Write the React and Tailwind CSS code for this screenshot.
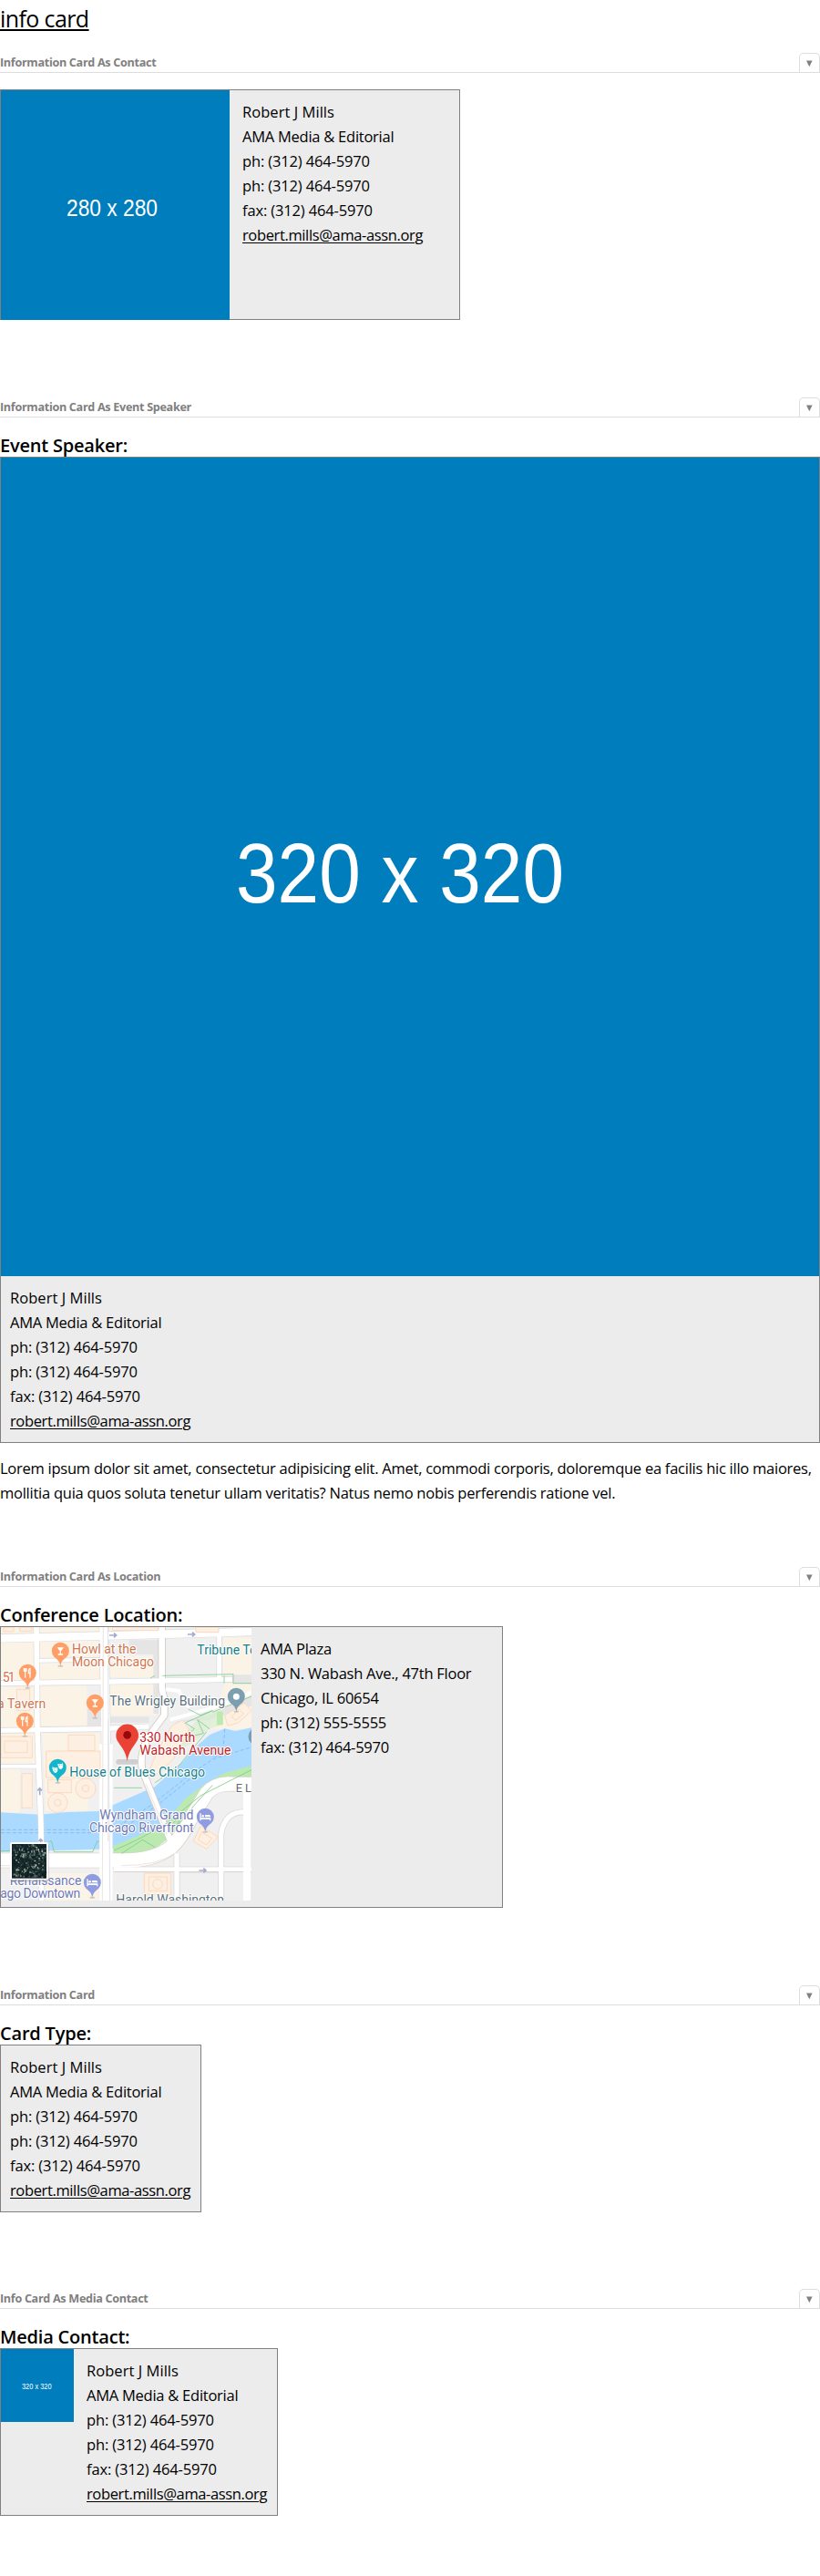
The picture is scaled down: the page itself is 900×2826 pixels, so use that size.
import React from "react";

const BODY = "text-[16.5px] leading-[27px] tracking-[-0.25px] whitespace-nowrap";

function SectionHeader({ title }) {
  return (
    <header className="flex h-[22px] items-end justify-between border-b border-[#ddd]">
      <h2 className="text-[12.6px] leading-[20px] font-bold tracking-[-0.3px] whitespace-nowrap text-[#808080]">{title}</h2>
      <button aria-label="Toggle" className="flex h-[21px] w-[23px] items-center justify-center rounded-t-[5px] border border-b-0 border-[#ddd]">
        <svg width="7" height="8" viewBox="0 0 7 8" className="mt-0.5">
          <path d="M0 0.5H6.6L3.3 7.2Z" fill="#808080" />
        </svg>
      </button>
    </header>
  );
}

function Placeholder({ label, className, size, x, baseline, length, box }) {
  return (
    <svg className={className} viewBox={box} preserveAspectRatio="none">
      <rect width="100%" height="100%" fill="#007dbc" />
      <text x={x} y={baseline} fill="#fff" fontFamily="Liberation Sans, sans-serif" fontSize={size} textLength={length} lengthAdjust="spacingAndGlyphs">
        {label}
      </text>
    </svg>
  );
}

function Heading({ children }) {
  return <h3 className="h-[43px] pt-[19px] text-[20px] leading-[23px] font-semibold tracking-[-0.2px] whitespace-nowrap">{children}</h3>;
}

function Contact() {
  return (
    <div className={BODY}>
      <p className="tracking-[0.05px]">Robert J Mills</p>
      <p>AMA Media &amp; Editorial</p>
      <p className="tracking-[-0.15px]">ph: (312) 464-5970</p>
      <p className="tracking-[-0.15px]">ph: (312) 464-5970</p>
      <p className="tracking-[-0.15px]">fax: (312) 464-5970</p>
      <p><a className="tracking-[-0.37px] underline decoration-1 underline-offset-2">robert.mills@ama-assn.org</a></p>
    </div>
  );
}

function Pin({ x, y, color, kind }) {
  return (
    <g transform={`translate(${x} ${y})`}>
      <ellipse cx="0" cy="49" rx="9" ry="3" fill="#b9b5ad" opacity=".7" />
      <path d="M0 49C-3 34-9 28-20 20A28.500 28.500 0 1 1 20 20C9 28 3 34 0 49Z" fill={color} />
      {kind === "food" && (
        <g stroke="#fff" strokeWidth="3.5" fill="none">
          <path d="M-12-16V-7Q-8-2-4-7V-16M-8-16V16M8 16V-15Q2-12 3 1H8" />
        </g>
      )}
      {kind === "bar" && <path d="M-11-12H11L2 0V9H8V13H-8V9H-2V0Z" fill="#fff" />}
      {kind === "bed" && (
        <g>
          <path d="M-18-12H-14V3H18V12H14V8H-14V12H-18ZM-1-7H13Q18-6 18 0H-1Z" fill="#fff" />
          <circle cx="-8" cy="-3" r="4" fill="#fff" />
        </g>
      )}
      {kind === "dot" && <circle r="10.500" fill="#fff" />}
      {kind === "mask" && (
        <g fill="#fff">
          <path d="M0-14Q8-10 17-15Q20 3 10 5Q1 4 0-14Z" />
          <path d="M-18-3Q-9 2-1-2Q3 14-7 17Q-17 16-18-3Z" />
          <path d="M-13 4h3M-6 4h3M-12 11q4-3 7 0M5-8h3M12-8h3" stroke={color} strokeWidth="2" fill="none" />
        </g>
      )}
    </g>
  );
}

const SPECKLE_COLORS = ["#0d1c20", "#1d3430", "#35504a", "#10262b", "#5b6f6a", "#8d948c", "#213c33", "#c1beb2"];
const SPECKLES = (() => {
  let seed = 7;
  const next = () => (seed = (seed * 1103515245 + 12345) % 2147483648) / 2147483648;
  return Array.from({ length: 330 }, () => ({
    x: 39 + next() * 108,
    y: 969 + next() * 105,
    w: 3 + next() * 4,
    h: 3 + next() * 5,
    c: SPECKLE_COLORS[Math.floor(Math.pow(next(), 1.3) * 8)],
  }));
})();

const RIVER_DRIVE = "M3 1023H400Q505 1025 563 980Q595 950 625 890L680 802Q705 773 750 771L828 772";
const BRIDGE = "M533 255V460L541 490V545L515 580Q475 630 470 665Q462 700 470 730L562 960";

function CityMap() {
  const halo = { stroke: "#fff", strokeWidth: 6, paintOrder: "stroke", strokeLinejoin: "round" };
  return (
    <svg className="h-[300px] w-[275px] shrink-0" viewBox="3 255 825 900" fontFamily="Roboto, sans-serif" fontSize="42">
      <rect x="3" y="255" width="825" height="900" fill="#f0f0f0" />
      <g fill="#faf3e6">
        <path d="M3 255H520V275H3ZM3 305H112V430H3ZM130 300H330V355H130ZM130 375H330V428H130ZM360 350H515V420H360Z" />
        <path d="M3 452H115V585H3ZM133 450H285V580H133ZM360 445H515V545H360ZM3 605H118V703H3ZM140 605H335V700H290V860H150ZM3 722H65V865H3ZM735 290H828V412H735ZM740 440H828V590H690ZM150 1065H325V1155H150Z" />
      </g>
      <g fill="#e5e5e5">
        <path d="M425 298H515V345H425ZM505 298H522V540H505ZM288 525H330V580H288ZM360 550H490V570H360ZM765 412H828V442H765ZM590 1057H720V1066H590ZM560 570L690 545L828 480V515L690 560Z" />
        <rect x="382" y="690" width="72" height="17" rx="8" fill="#cfcfcf" />
      </g>
      <path d="M3 865L130 872L220 864L325 861L373 840L510 780L600 700L655 640L690 610L740 589L775 597L828 586V720L680 780L610 835L550 900L460 950L373 985L3 995Z" fill="#aadaff" />
      <path d="M373 975L460 940L515 920L550 890L610 820L680 768L740 735L828 711V750L750 752L690 785L625 860L560 945L510 985L440 1005L373 1006Z" fill="#bbe9b0" />
      <path d="M620 590L665 545L705 530L735 535V575L690 590L650 625L600 655L590 620Z" fill="#d5efcc" opacity=".6" />
      <rect x="714" y="533" width="20" height="44" fill="#bbe9b0" />
      <g fill="none" stroke="#7fa9e2" strokeWidth="2" strokeDasharray="12 7">
        <path d="M3 922H325M3 932H325M375 920L500 840L620 745L700 690L828 650M385 930L520 840L650 735M740 590L735 660L700 690" />
      </g>
      <g fill="none" stroke="#dcdad8" strokeLinecap="butt" strokeLinejoin="round">
        <path d="M3 292L360 283L828 270" strokeWidth="30" />
        <path d="M3 440L360 435L765 427" strokeWidth="20" />
        <path d="M3 595L330 590L490 582" strokeWidth="20" />
        <path d="M120 255L123 600L135 910L137 1155" strokeWidth="21" />
        <path d="M342 255L349 640V1155" strokeWidth="33" />
        <path d={BRIDGE} strokeWidth="25" stroke="#d4c8c0" />
        <path d="M722 280V430" strokeWidth="19" />
        <path d={RIVER_DRIVE} strokeWidth="50" stroke="#d8cdc5" />
        <path d="M375 1052H828" strokeWidth="18" stroke="#d4c8c0" />
        <path d="M582 1000V1155M728 1155V955Q725 920 745 890Q765 862 803 864M813 780V1155" strokeWidth="21" />
        <path d="M3 713H125M130 365L330 362" strokeWidth="16" />
      </g>
      <g fill="none" stroke="#fff" strokeLinecap="butt" strokeLinejoin="round">
        <path d="M3 292L360 283L828 270" strokeWidth="26" />
        <path d="M3 440L360 435L765 427" strokeWidth="16" />
        <path d="M3 595L330 590L490 582" strokeWidth="16" />
        <path d="M120 255L123 600L135 910L137 1155" strokeWidth="17" />
        <path d="M342 255L349 640" strokeWidth="29" />
        <path d="M349 640V1155" strokeWidth="43" />
        <path d={BRIDGE} strokeWidth="20" />
        <path d="M722 280V430" strokeWidth="15" />
        <path d={RIVER_DRIVE} strokeWidth="46" />
        <path d="M375 1052H828" strokeWidth="14" />
        <path d="M582 1000V1155M728 1155V955Q725 920 745 890Q765 862 803 864" strokeWidth="16" />
        <path d="M813 780V1155" strokeWidth="24" />
        <path d="M3 713H125M130 365L330 362M545 460L590 465L602 505L625 518M560 560L720 515L828 470" strokeWidth="12" />
      </g>
      <g fill="none" stroke="#7fcb8d" strokeWidth="2.500">
        <path d="M495 423L510 415M535 415L768 410V440H828M738 415V440M375 784H467M510 768L590 710L680 600M160 960H170L178 995H305L320 960H325M3 992H160M375 990Q470 950 550 900L660 810L828 725M400 1000L470 955L510 980M570 900L600 870L580 915L645 835L700 775M620 525L660 545L700 530L610 570L640 590L605 620L670 605L650 560L690 590M700 535L828 483" />
      </g>
      <g fill="none" stroke="#d6c9c0" strokeWidth="1.500">
        <path d="M3 1040H33M400 1040Q520 1040 575 1000M480 770L550 940M340 255L337 1155M356 560V960" />
        <path d="M355 255L362 1155" stroke="#dce3ef" strokeWidth="3" />
      </g>
      <g fill="#fdf0e2" stroke="#fbd9bd" strokeWidth="3">
        <path d="M12 255H45V270H12ZM65 255H105V268H65ZM370 255H520V266H370ZM645 255H720V272H645ZM225 610H312V662H225ZM3 615H106V685H3ZM15 630H90V668H15ZM152 663H330V750H152ZM72 737H106V850H72ZM158 757H235V800H158ZM55 460H98V530H55ZM475 1065H563V1135H475ZM490 1077H550V1123H490ZM740 545L805 505L828 530L785 570L750 580ZM660 910L718 945L680 985L637 960ZM565 580L600 562L622 590L600 640L570 690L505 750L490 730L520 660Z" />
        <circle cx="190" cy="833" r="32" />
        <circle cx="190" cy="833" r="11" />
        <circle cx="282" cy="786" r="33" />
        <circle cx="282" cy="786" r="11" />
        <circle cx="519" cy="1101" r="16" />
        <path d="M762 550L787 525L802 540L777 562ZM664 930L698 950L680 972L652 955Z" />
      </g>
      <g fill="none" stroke="#a5a8d2" strokeWidth="5">
        <path d="M360 282H382M375 275L383 282L375 289M618 279H640M633 272L641 279L633 286M655 1056H677M670 1049L678 1056L670 1063M131 808V786M124 793L131 785L138 793M134 970V954M127 960L134 953L141 960" />
      </g>
      <Pin x={199} y={334} color="#ff9e67" kind="bar" />
      <Pin x={91} y={406} color="#ff9e67" kind="food" />
      <Pin x={313} y={505} color="#ff9e67" kind="bar" />
      <Pin x={82} y={565} color="#ff9e67" kind="food" />
      <Pin x={778} y={484} color="#7b9eb0" kind="dot" />
      <Pin x={846} y={615} color="#7b9eb0" />
      <Pin x={190} y={718} color="#12b5cb" kind="mask" />
      <Pin x={676} y={880} color="#909ce1" kind="bed" />
      <Pin x={304} y={1096} color="#909ce1" kind="bed" />
      <path d="M419 697C414 664 403 655 391 636A37 37 0 1 1 447 636C435 655 424 664 419 697Z" fill="#ea4335" />
      <circle cx="419" cy="610" r="13" fill="#960a0a" />
      <g fill="#cf7650" style={halo}>
        <text x="237" y="342" textLength="211">Howl at the</text>
        <text x="237" y="384" textLength="270">Moon Chicago</text>
        <text x="8" y="435" textLength="42">51</text>
        <text x="-9" y="522" textLength="160">a Tavern</text>
      </g>
      <g style={halo}>
        <text x="649" y="345" fill="#16808a">Tribune To</text>
        <text x="361" y="514" fill="#5c727d" textLength="380">The Wrigley Building</text>
        <text x="229" y="747" fill="#16808a" textLength="446">House of Blues Chicago</text>
        <g fill="#c5221f">
          <text x="460" y="633" textLength="183">330 North</text>
          <text x="460" y="675" textLength="300">Wabash Avenue</text>
        </g>
        <g fill="#6f78b4">
          <text x="328" y="888" textLength="309">Wyndham Grand</text>
          <text x="294" y="930" textLength="344">Chicago Riverfront</text>
          <text x="32" y="1104" textLength="236">Renaissance</text>
          <text x="1" y="1146" textLength="264">ago Downtown</text>
        </g>
        <text x="776" y="799" fill="#65696d" fontSize="38">E L</text>
        <text x="382" y="1168" fill="#5c727d" textLength="356">Harold Washington</text>
      </g>
      <rect x="35" y="967" width="126" height="126" rx="7" fill="#777" opacity=".35" />
      <rect x="33" y="963" width="126" height="124" rx="6" fill="#fff" />
      <rect x="39" y="969" width="114" height="113" fill="#142629" />
      {SPECKLES.map((s, i) => (
        <rect key={i} x={s.x} y={s.y} width={s.w} height={s.h} fill={s.c} />
      ))}
    </svg>
  );
}

export default function App() {
  return (
    <main className="h-[2826px] w-[900px] overflow-hidden bg-white font-['Open_Sans','Noto_Sans',sans-serif] text-black">
      <h1 className="h-[58px] pt-[2px] text-[25px] leading-[36px] tracking-[-0.6px]">
        <a className="underline decoration-2 underline-offset-2">info card</a>
      </h1>

      <section className="h-[378px]">
        <SectionHeader title="Information Card As Contact" />
        <div className="mt-[18px] flex h-[253px] w-[505px] border border-[#808080] bg-[#ececec]">
          <Placeholder label="280 x 280" className="h-[252px] w-[251px] shrink-0" box="0 0 251 252" size="26" x="72" baseline="137.5" length="100" />
          <div className="pt-[10px] pl-[14px]"><Contact /></div>
        </div>
      </section>

      <section className="h-[1283px]">
        <SectionHeader title="Information Card As Event Speaker" />
        <Heading>Event Speaker:</Heading>
        <div className="h-[1082px] border border-[#808080] bg-[#ececec]">
          <Placeholder label="320 x 320" className="block h-[898px] w-[898px]" box="0 0 898 898" size="93" x="258" baseline="487.5" length="360" />
          <div className="pt-[10px] pl-[10px]"><Contact /></div>
        </div>
        <div className={BODY + " pt-[14px]"}>
          <p>Lorem ipsum dolor sit amet, consectetur adipisicing elit. Amet, commodi corporis, doloremque ea facilis hic illo maiores,</p>
          <p>mollitia quia quos soluta tenetur ullam veritatis? Natus nemo nobis perferendis ratione vel.</p>
        </div>
      </section>

      <section className="h-[459px]">
        <SectionHeader title="Information Card As Location" />
        <Heading>Conference Location:</Heading>
        <div className="flex h-[309px] w-[552px] border border-[#808080] bg-[#ececec]">
          <CityMap />
          <div className={BODY + " pt-[10px] pl-[10px]"}>
            <p>AMA Plaza</p>
            <p>330 N. Wabash Ave., 47th Floor</p>
            <p>Chicago, IL 60654</p>
            <p>ph: (312) 555-5555</p>
            <p>fax: (312) 464-5970</p>
          </div>
        </div>
      </section>

      <section className="h-[333px]">
        <SectionHeader title="Information Card" />
        <Heading>Card Type:</Heading>
        <div className="h-[184px] w-[221px] border border-[#808080] bg-[#ececec] pt-[10px] pl-[10px]">
          <Contact />
        </div>
      </section>

      <section>
        <SectionHeader title="Info Card As Media Contact" />
        <Heading>Media Contact:</Heading>
        <div className="flex h-[184px] w-[305px] border border-[#808080] bg-[#ececec]">
          <Placeholder label="320 x 320" className="h-[80px] w-[80px] shrink-0" box="0 0 80 80" size="8.300" x="23" baseline="43.500" length="32.500" />
          <div className="pt-[10px] pl-[14px]"><Contact /></div>
        </div>
      </section>
    </main>
  );
}
